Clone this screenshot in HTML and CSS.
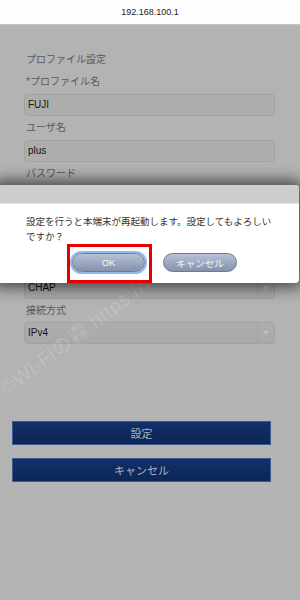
FILE: index.html
```html
<!DOCTYPE html>
<html lang="ja">
<head>
<meta charset="utf-8">
<title>プロファイル設定</title>
<link rel="stylesheet" href="styles.css">
</head>
<body>
<div class="topbar">192.168.100.1</div>
<main class="form">
  <div class="label">プロファイル設定</div>
  <div class="label">*プロファイル名</div>
  <div class="input">FUJI</div>
  <div class="label">ユーザ名</div>
  <div class="input">plus</div>
  <div class="label">パスワード</div>
  <div class="input">••••</div>
  <div class="label">*APN</div>
  <div class="input">plus.4g</div>
  <div class="label">認証方式</div>
  <div class="select"><span>CHAP</span><i class="arrow"></i></div>
  <div class="label">接続方式</div>
  <div class="select"><span>IPv4</span><i class="arrow"></i></div>
  <div class="actions">
    <button class="btn">設定</button>
    <button class="btn">キャンセル</button>
  </div>
</main>

<div class="watermark">©Wi-Fiの森 https://wifimemori.com</div>

<div class="dialog">
  <div class="dialog-head"></div>
  <div class="dialog-body">
    <p class="msg">設定を行うと本端末が再起動します。設定してもよろしいですか？</p>
    <div class="dialog-btns">
      <button class="pill ok">OK</button>
      <button class="pill">キャンセル</button>
    </div>
  </div>
</div>
<div class="highlight"></div>
</body>
</html>
```
FILE: styles.css
```css
html, body {
  margin: 0;
  padding: 0;
}
body {
  width: 300px;
  height: 600px;
  overflow: hidden;
  background: #b3b3b3;
  font-family: "Liberation Sans", "Noto Sans CJK JP", sans-serif;
  position: relative;
}
.topbar {
  height: 25px;
  line-height: 25px;
  background: #fdfdfd;
  border-bottom: 1px solid #c4c4c4;
  box-sizing: border-box;
  text-align: center;
  font-size: 9px;
  color: #1c1c1c;
}
.form {
  display: flex;
  flex-direction: column;
  padding-top: 24px;
}
.label {
  margin-left: 26px;
  height: 22px;
  line-height: 22px;
  font-size: 10px;
  color: #585858;
}
.input, .select {
  margin: 1px 0 1px 24px;
  width: 251px;
  height: 22px;
  box-sizing: border-box;
  border: 1px solid #a2a2a2;
  border-radius: 4px;
  background: #adadad;
  font-size: 10px;
  line-height: 20px;
  padding-left: 3px;
  color: #141414;
}
.select {
  margin-top: 0;
  display: flex;
  align-items: center;
  padding-left: 3px;
  background: linear-gradient(#aeaeae, #a9a9a9);
}
.select span {
  flex: 1;
  height: 20px;
  border-right: 1px solid #a0a0a0;
}
.arrow {
  width: 16px;
  height: 20px;
  position: relative;
}
.arrow::after {
  content: "";
  position: absolute;
  left: 5px;
  top: 8px;
  border-left: 3px solid transparent;
  border-right: 3px solid transparent;
  border-top: 4px solid #c4c4c4;
}
.actions {
  margin: 76px 0 0 12px;
  width: 259px;
  display: flex;
  flex-direction: column;
  gap: 13px;
}
.btn {
  height: 24px;
  border: 1px solid #3d5a90;
  background: linear-gradient(#12306a, #0c2557);
  color: #a9b1c2;
  font-family: inherit;
  font-size: 11px;
  padding: 0;
}
.watermark {
  position: absolute;
  left: 10px;
  top: 372px;
  transform-origin: 0 100%;
  transform: rotate(-37deg);
  font-size: 20px;
  white-space: nowrap;
  color: rgba(255, 255, 255, 0.17);
  letter-spacing: 0.5px;
}
.dialog {
  position: absolute;
  top: 185px;
  left: -4px;
  width: 303px;
  height: 98px;
  border-radius: 4px;
  overflow: hidden;
  background: #fff;
  box-shadow: 0 0 16px 4px rgba(0, 0, 0, 0.65);
}
.dialog-head {
  height: 18px;
  background: #cdcdcd;
  border-bottom: 1px solid #e4e4e4;
}
.dialog-body {
  padding: 10px 0 0 30px;
}
.msg {
  margin: 0;
  width: 252px;
  font-size: 9.5px;
  line-height: 15px;
  color: #333;
}
.dialog-btns {
  margin-top: 9px;
  margin-left: 46px;
  display: flex;
  align-items: center;
  gap: 18px;
}
.pill {
  height: 19px;
  width: 74px;
  padding: 0;
  border: 1px solid #6d7b98;
  border-radius: 10px;
  background: linear-gradient(#b7c2d6, #8592ad);
  color: #f2f4f8;
  font-family: inherit;
  font-size: 9.5px;
}
.pill.ok {
  width: 73px;
  box-shadow: 0 0 0 2px #92b8f0;
}
.highlight {
  position: absolute;
  left: 67px;
  top: 244px;
  width: 85px;
  height: 39px;
  box-sizing: border-box;
  border: 3px solid #e60000;
}
```
